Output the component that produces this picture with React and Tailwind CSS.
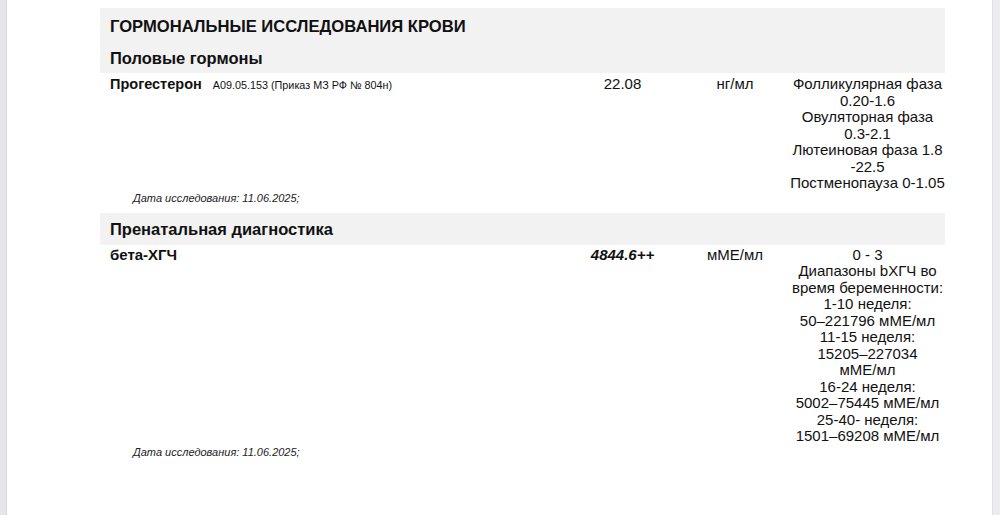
export default function App() {
  const font = { fontFamily: '"Liberation Sans", Arial, sans-serif' };
  const prog = [
    "Фолликулярная фаза",
    "0.20-1.6",
    "Овуляторная фаза",
    "0.3-2.1",
    "Лютеиновая фаза 1.8",
    "-22.5",
    "Постменопауза 0-1.05",
  ];
  const hcg = [
    "0 - 3",
    "Диапазоны bХГЧ во",
    "время беременности:",
    "1-10 неделя:",
    "50–221796 мМЕ/мл",
    "11-15 неделя:",
    "15205–227034",
    "мМЕ/мл",
    "16-24 неделя:",
    "5002–75445 мМЕ/мл",
    "25-40- неделя:",
    "1501–69208 мМЕ/мл",
  ];
  return (
    <div className="flex w-[1000px] h-[515px] bg-white overflow-hidden text-[#111]" style={font}>
      <div className="w-[7px] h-full bg-[#e6e6ea] border-r border-[#d6d6dc]" />
      <div className="flex-1 h-full">
        <div className="ml-[93px] w-[845px] pt-[8px]">
          <div className="bg-[#f2f2f2] pl-[10px] pt-[9px] pb-[5px]">
            <div className="text-[16.6px] font-bold leading-[20px]">ГОРМОНАЛЬНЫЕ ИССЛЕДОВАНИЯ КРОВИ</div>
            <div className="text-[16.5px] font-bold leading-[20px] mt-[11px]">Половые гормоны</div>
          </div>
          <div className="flex pt-[3px]">
            <div className="flex-1 pl-[10px] flex items-baseline">
              <span className="text-[14.5px] font-bold leading-[16.5px]">Прогестерон</span>
              <span className="text-[10.8px] ml-[11px]">A09.05.153 (Приказ МЗ РФ № 804н)</span>
            </div>
            <div className="w-[115px] text-center text-[15px] leading-[16.5px]">22.08</div>
            <div className="w-[110px] text-center text-[15px] leading-[16.5px]">нг/мл</div>
            <div className="w-[155px] text-center text-[15px] leading-[16.5px]">
              {prog.map((l, i) => (
                <div key={i}>{l}</div>
              ))}
            </div>
          </div>
          <div className="pl-[33px] text-[11px] italic text-[#222] leading-[12px]">
            Дата исследования: 11.06.2025;
          </div>
          <div className="bg-[#f2f2f2] pl-[10px] mt-[9px] h-[32px] flex items-center">
            <div className="text-[16.5px] font-bold leading-[20px] pt-[1px]">Пренатальная диагностика</div>
          </div>
          <div className="flex pt-[2px]">
            <div className="flex-1 pl-[10px] text-[15px] font-bold leading-[16.5px]">бета-ХГЧ</div>
            <div className="w-[115px] text-center text-[15px] leading-[16.5px] font-bold italic">4844.6++</div>
            <div className="w-[110px] text-center text-[15px] leading-[16.5px]">мМЕ/мл</div>
            <div className="w-[155px] text-center text-[15px] leading-[16.5px]">
              {hcg.map((l, i) => (
                <div key={i}>{l}</div>
              ))}
            </div>
          </div>
          <div className="pl-[33px] text-[11px] italic text-[#222] leading-[12px] mt-[1px]">
            Дата исследования: 11.06.2025;
          </div>
        </div>
      </div>
      <div className="w-[8px] h-full bg-[#ececf0] border-l border-[#e0e0e6]" />
    </div>
  );
}
